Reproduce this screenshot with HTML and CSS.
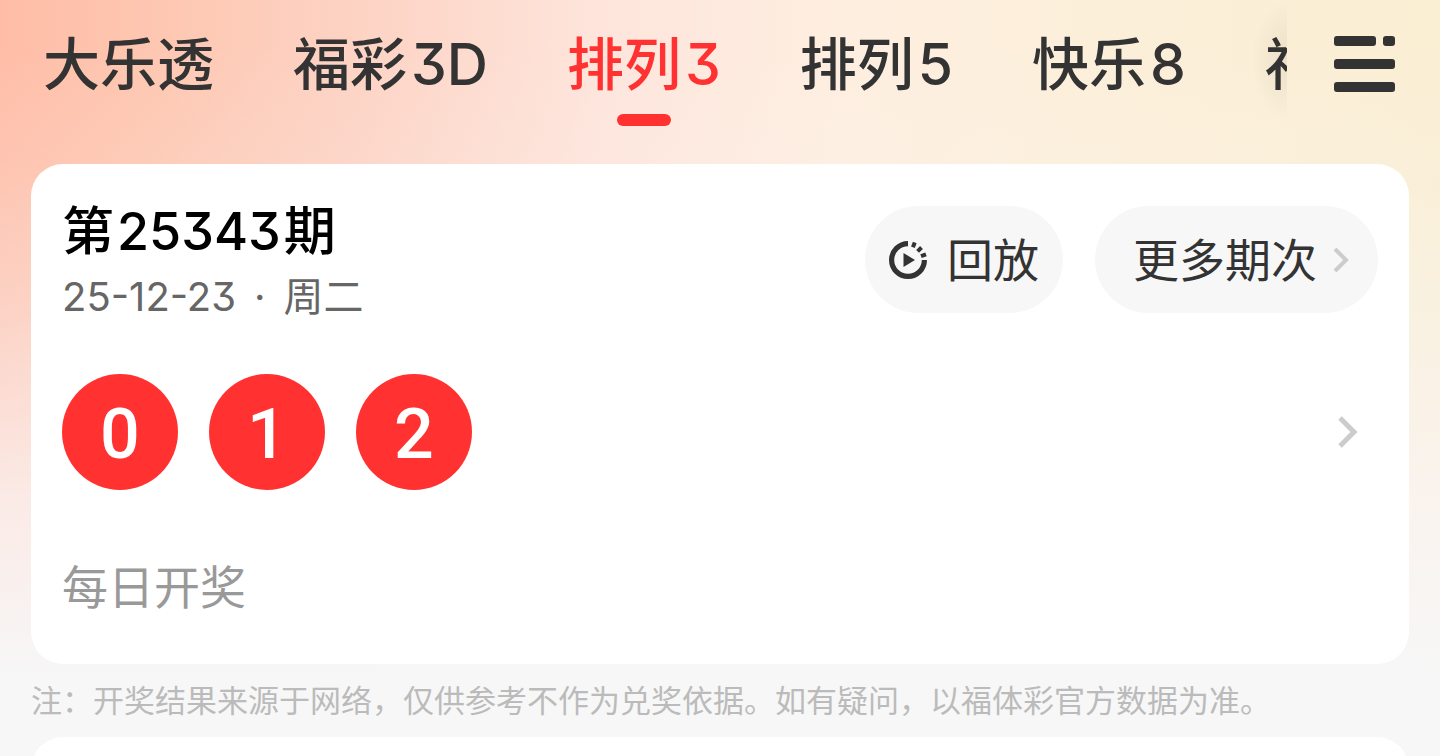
FILE: index.html
```html
<!DOCTYPE html>
<html lang="zh-CN">
<head>
<meta charset="utf-8">
<meta name="viewport" content="width=device-width, initial-scale=1">
<title>开奖结果</title>
<link rel="stylesheet" href="styles.css">
</head>
<body>
<header class="topbar">
  <nav class="tabs" aria-label="彩种">
    <button class="tab" type="button">大乐透</button>
    <button class="tab" type="button">福彩<span class="num">3D</span></button>
    <button class="tab tab-active" type="button" aria-current="page">排列<span class="num">3</span></button>
    <button class="tab" type="button">排列<span class="num">5</span></button>
    <button class="tab" type="button">快乐<span class="num">8</span></button>
    <button class="tab" type="button">福</button>
  </nav>
  <button class="menu" type="button" aria-label="全部彩种">
    <svg class="menu-icon" viewBox="0 0 62 56" aria-hidden="true">
      <rect x="1" y="0" width="42" height="10" rx="3"/>
      <rect x="50" y="0" width="12" height="10" rx="3"/>
      <rect x="1" y="23" width="61" height="10" rx="3"/>
      <rect x="1" y="46" width="61" height="10" rx="3"/>
    </svg>
  </button>
</header>
<main class="content">
  <section class="card">
    <div class="card-head">
      <div>
        <h1 class="issue">第<span class="num">25343</span>期</h1>
        <p class="date">25-12-23<span class="dot">·</span>周二</p>
      </div>
      <div class="actions">
        <button class="pill" type="button">
          <svg class="replay-icon" viewBox="0 0 38 38" aria-hidden="true">
            <path d="M19 2.600A16.400 16.400 0 1 0 35.400 19" fill="none" stroke="#333" stroke-width="5.200"/>
            <path d="M25.800 1.500l-1.900 4.800M32.500 6.500l-3.900 3.900M37 13.300l-5 1.900" fill="none" stroke="#333" stroke-width="4"/>
            <path d="M14.500 12v14L26 19z" fill="#333"/>
          </svg>
          回放
        </button>
        <button class="pill pill-more" type="button">
          更多期次
          <svg class="more-icon" viewBox="0 0 16 24" aria-hidden="true"><path d="M2 1l11 11L2 23" fill="none" stroke="#ccc" stroke-width="4"/></svg>
        </button>
      </div>
    </div>
    <a class="result" href="#" aria-label="开奖详情">
      <span class="balls">
        <span class="ball">0</span>
        <span class="ball">1</span>
        <span class="ball">2</span>
      </span>
      <svg class="go-icon" viewBox="0 0 20 32" aria-hidden="true"><path d="M2 2l14 14L2 30" fill="none" stroke="#ccc" stroke-width="5"/></svg>
    </a>
    <p class="schedule">每日开奖</p>
  </section>
  <p class="note">注：开奖结果来源于网络，仅供参考不作为兑奖依据。如有疑问，以福体彩官方数据为准。</p>
  <section class="card"></section>
</main>
</body>
</html>
```

FILE: styles.css
```css
* {
  box-sizing: border-box;
}

body {
  margin: 0;
  height: 100vh;
  overflow: hidden;
  color: #333;
  font-family: "Inter", "Noto Sans CJK SC", sans-serif;
  font-feature-settings: "cv09";
  background:
    linear-gradient(to bottom, rgba(247, 247, 247, 0) 40px, rgba(247, 247, 247, 0.12) 160px, rgba(247, 247, 247, 0.35) 300px, rgba(250, 244, 244, 0.82) 500px, #f7f7f7 680px),
    linear-gradient(to right, #ffbda7 0, #fec6b0 10%, #fdd3c4 25%, #fee5dc 42%, #feeee0 58%, #fcefda 75%, #faeed3 100%);
}

h1,
p {
  margin: 0;
}

button {
  border: 0;
  margin: 0;
  padding: 0;
  background: none;
  color: inherit;
  font: inherit;
  font-feature-settings: inherit;
  white-space: nowrap;
}

.topbar {
  display: flex;
  height: 164px;
}

.tabs {
  position: relative;
  display: flex;
  flex: 1;
  gap: 79px;
  min-width: 0;
  padding-left: 43px;
  overflow: hidden;
}

.tabs::after {
  content: "";
  position: absolute;
  top: 0;
  right: 0;
  width: 36px;
  height: 120px;
  background: radial-gradient(ellipse at right, rgba(60, 50, 40, 0.08), rgba(60, 50, 40, 0) 70%);
}

.tab {
  position: relative;
  flex: none;
  height: 128px;
  font-size: 57px;
  font-weight: 500;
  line-height: 130px;
}

.tab .num {
  margin-left: 4px;
}

.tab-active {
  color: #ff3231;
}

.tab-active::after {
  content: "";
  position: absolute;
  bottom: 2px;
  left: 50%;
  width: 54px;
  height: 12px;
  margin-left: -27px;
  border-radius: 6px;
  background: #ff3231;
}

.menu {
  flex: none;
  width: 153px;
  height: 128px;
}

.menu-icon {
  display: block;
  width: 62px;
  height: 56px;
  margin: 0 auto;
  fill: #333;
}

.content {
  padding: 0 31px;
}

.card {
  min-height: 100px;
  padding: 31px;
  border-radius: 32px;
  background: #fff;
}

.card-head {
  display: flex;
  justify-content: space-between;
}

.issue {
  padding-top: 2px;
  color: #000;
  font-size: 52px;
  font-weight: 500;
  line-height: 70px;
}

.issue .num {
  margin: 0 3px;
}

.date {
  color: #666;
  font-size: 40px;
  line-height: 60px;
}

.date .dot {
  margin: 0 18px;
}

.actions {
  display: flex;
  gap: 32px;
  padding-top: 11px;
}

.pill {
  display: flex;
  align-items: center;
  gap: 20px;
  height: 107px;
  padding: 0 24px;
  border-radius: 54px;
  background: #f7f7f7;
  font-size: 46px;
  line-height: 64px;
}

.pill-more {
  gap: 16px;
  padding: 0 29px 0 38px;
}

.replay-icon {
  width: 38px;
  height: 38px;
}

.more-icon {
  width: 16px;
  height: 24px;
}

.result {
  display: flex;
  align-items: center;
  justify-content: space-between;
  margin-top: 47px;
  padding-right: 20px;
  text-decoration: none;
}

.balls {
  display: flex;
  gap: 31px;
}

.ball {
  width: 116px;
  height: 116px;
  border-radius: 50%;
  background: #ff3231;
  color: #fff;
  font-family: "Roboto", sans-serif;
  font-size: 70px;
  font-weight: 500;
  line-height: 120px;
  text-align: center;
}

.go-icon {
  width: 20px;
  height: 32px;
}

.schedule {
  margin-top: 64px;
  margin-bottom: 12px;
  color: #999;
  font-size: 46px;
  line-height: 67px;
}

.note {
  color: #bbb;
  font-size: 31px;
  line-height: 73px;
}
```
